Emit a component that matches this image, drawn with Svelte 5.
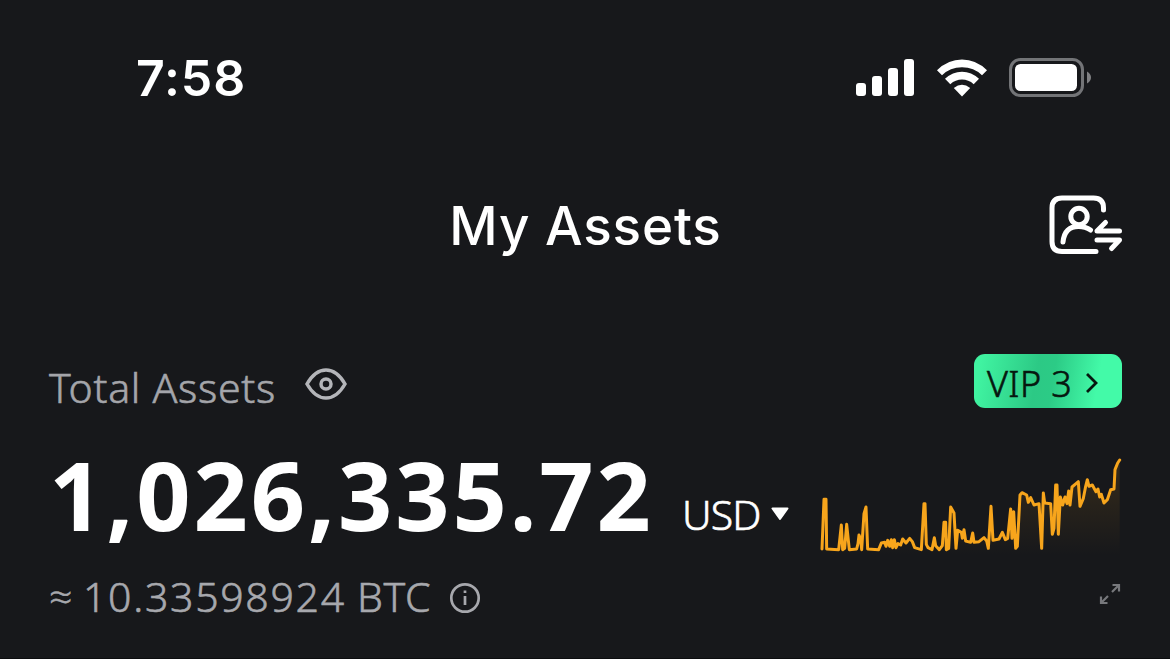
<script lang="ts">
    const time = "7:58";
    const balance = "1,026,335.72";
    const btc = "10.33598924";
    const bars = [13, 20, 28, 37];

    // balance history, left to right
    const history: [number, number][] = [
        [36, 312], [42, 163], [48, 163], [50, 312], [86, 314], [94, 240],
        [98, 314], [104, 310], [110, 238], [118, 314], [140, 312], [144, 296],
        [147, 270], [152, 282], [155, 314], [162, 206], [168, 186], [173, 312],
        [206, 314], [214, 294], [224, 292], [228, 304], [233, 286], [239, 304],
        [244, 284], [248, 308], [253, 284], [258, 308], [264, 296], [272, 300],
        [278, 282], [288, 294], [299, 280], [307, 290], [314, 308], [334, 314],
        [342, 176], [345, 176], [349, 298], [354, 308], [366, 314], [373, 278],
        [377, 302], [388, 314], [397, 302], [402, 232], [407, 232], [409, 314],
        [416, 310], [422, 186], [432, 204], [438, 310], [443, 256], [454, 262],
        [457, 280], [462, 254], [467, 288], [482, 292], [488, 264], [492, 292],
        [507, 290], [522, 278], [530, 288], [535, 310], [543, 184], [549, 286],
        [567, 282], [577, 262], [586, 284], [593, 280], [602, 192], [606, 280],
        [611, 200], [617, 310], [622, 304], [630, 150], [636, 143], [650, 150],
        [655, 172], [662, 158], [672, 180], [687, 176], [695, 310], [700, 144],
        [704, 174], [722, 176], [727, 268], [732, 250], [737, 120], [741, 120],
        [745, 268], [751, 156], [758, 180], [765, 156], [771, 176], [776, 138],
        [780, 180], [786, 126], [798, 116], [805, 110], [810, 184], [820, 160],
        [827, 124], [832, 104], [837, 124], [847, 120], [858, 140], [864, 132],
        [869, 156], [874, 148], [882, 174], [892, 164], [902, 134], [912, 132],
        [915, 74], [923, 54], [929, 45],
    ];

    const line = history.map(p => p.join(",")).join(" ");
</script>

<main>
    <header class="status">
        <div class="time">{time}</div>
        <div class="indicators">
            <div class="signal">
                {#each bars as height}
                    <i style="height: {height}px"></i>
                {/each}
            </div>
            <svg class="wifi" viewBox="0 0 52 38">
                <path d="M1 11.2Q12 .5 26 .5T51 11.2L46 16.3Q38 8.3 26 8.3T6 16.3Z" />
                <path d="M9 19.8Q16.5 12.7 26 12.7T43 19.8L37.7 25.2Q32.5 20.6 26 20.6T14.3 25.2Z" />
                <path d="M17.8 29Q26 22.5 34.2 29L26 37.5Z" />
            </svg>
            <svg class="battery" viewBox="0 0 82 39">
                <rect x="1.5" y="1.5" width="72" height="36" rx="10" fill="none" stroke="#737477" stroke-width="3" />
                <rect x="6" y="6" width="62" height="27" rx="5.5" fill="#fff" />
                <path d="M78 13.5Q82 16 82 19.5T78 25.5Z" fill="#808083" />
            </svg>
        </div>
    </header>

    <nav>
        <h1>My Assets</h1>
        <svg class="switch" viewBox="0 0 74 60">
            <path d="M54.5 15V13Q54.5 3 44.5 3H13Q3 3 3 13V46.5Q3 56.5 13 56.5H47" />
            <circle cx="30" cy="21.5" r="8.2" />
            <path d="M14 47Q15.5 31.5 29.500 31.500Q36.500 31.500 41.500 35" />
            <path d="M70.500 36H48L56.500 27.500" />
            <path d="M48 45H70.500L62.500 53.500" />
        </svg>
    </nav>

    <section>
        <div class="top">
            <span class="label">Total Assets</span>
            <svg class="eye" viewBox="0 0 42 32">
                <path d="M2 16Q10 2 21 2T40 16Q32 30 21 30T2 16Z" />
                <circle cx="21" cy="16" r="5" />
            </svg>
            <div class="vip">
                <span>VIP 3</span>
                <svg viewBox="0 0 14 22"><path d="M2 2L11 11L2 20" /></svg>
            </div>
        </div>

        <div class="main">
            <div class="balance">{balance}</div>
            <div class="currency">USD</div>
            <svg class="caret" viewBox="0 0 20 14">
                <path d="M2.5 1.5H17.5L10 12Z" />
            </svg>
            <svg class="chart" viewBox="0 0 960 360">
                <defs>
                    <linearGradient id="fade" x1="0" y1="0" x2="0" y2="1">
                        <stop offset="0" stop-color="#f7a41b" stop-opacity="0.14" />
                        <stop offset="1" stop-color="#f7a41b" stop-opacity="0" />
                    </linearGradient>
                </defs>
                <polygon points="36,330 {line} 929,330" fill="url(#fade)" />
                <polyline points={line} />
            </svg>
        </div>

        <div class="bottom">
            <span class="approx">≈</span>
            <span class="btc">{btc}</span>
            <span class="unit">BTC</span>
            <svg class="info" viewBox="0 0 32 32">
                <circle cx="16" cy="16" r="13.7" />
                <path d="M16 14V23M16 8.5V11" />
            </svg>
            <svg class="expand" viewBox="0 0 22 22">
                <path d="M13 9L20 2M13.5 2H20V8.5M9 13L2 20M2 13.5V20H8.5" />
            </svg>
        </div>
    </section>
</main>

<style>
    :global(body) {
        background: #17181b;
    }

    main {
        box-sizing: border-box;
        height: 659px;
        overflow: hidden;
        border-bottom: 1px solid #0c0d0f;
        color: #fff;
        font-family: "Noto Sans", "Open Sans", sans-serif;
        white-space: nowrap;
    }

    svg {
        display: block;
        flex-shrink: 0;
    }

    .status {
        display: flex;
        justify-content: space-between;
        align-items: center;
        height: 155px;
        padding: 0 79px 0 136px;
    }

    .time {
        font: 600 50px/60px Inter, sans-serif;
        letter-spacing: 0.9px;
    }

    .indicators {
        display: flex;
        align-items: center;
    }

    .signal {
        display: flex;
        align-items: flex-end;
        gap: 6px;
        height: 37px;
        margin-right: 22px;
    }

    .signal i {
        width: 10px;
        border-radius: 3px;
        background: #fff;
    }

    .wifi {
        width: 52px;
        height: 38px;
        margin-right: 21px;
        fill: #fff;
    }

    .battery {
        width: 82px;
        height: 39px;
    }

    nav {
        display: grid;
        grid-template-columns: 1fr auto 1fr;
        align-items: center;
        height: 141px;
        padding: 0 48px;
    }

    h1 {
        grid-column: 2;
        margin: 0 -1px 0 0;
        font: 500 53px/64px Inter, sans-serif;
        letter-spacing: 0.8px;
    }

    .switch {
        justify-self: end;
        width: 74px;
        height: 60px;
        margin: -2px -1px 0 0;
        fill: none;
        stroke: #fff;
        stroke-width: 5;
        stroke-linecap: round;
        stroke-linejoin: round;
    }

    section {
        padding: 58px 48px 0 49px;
    }

    .top {
        display: flex;
        align-items: center;
        height: 54px;
    }

    .label,
    .currency,
    .bottom {
        -webkit-text-stroke: 0.6px currentColor;
    }

    .label {
        width: 256px;
        padding-top: 11px;
        color: #a4a5aa;
        font-size: 41px;
        font-weight: 300;
        line-height: 54px;
        letter-spacing: 0.7px;
    }

    .eye {
        width: 42px;
        height: 32px;
        margin-top: 6px;
        fill: none;
        stroke: #b4b5b9;
        stroke-width: 3.5;
    }

    .vip {
        box-sizing: border-box;
        display: flex;
        align-items: center;
        width: 148px;
        height: 54px;
        margin-left: auto;
        padding-left: 13px;
        border-radius: 11px;
        background: linear-gradient(100deg, #40f3a1 5%, #2cc985 42%, #2ccb86 53%, #43faa8 82%);
        color: #06170f;
        font-size: 36px;
        font-weight: 300;
        line-height: 54px;
        letter-spacing: 0.4px;
        -webkit-text-stroke: 0.6px currentColor;
    }

    .vip span {
        width: 98px;
        padding-top: 5px;
    }

    .vip svg {
        width: 14px;
        height: 22px;
        margin-top: 3px;
        fill: none;
        stroke: #06170f;
        stroke-width: 2.8;
    }

    .main {
        display: flex;
        height: 120px;
        margin-top: 37px;
    }

    .balance {
        width: 633px;
        margin-top: -11px;
        font-size: 95px;
        font-weight: 700;
        line-height: 120px;
        letter-spacing: 2.9px;
    }

    .currency {
        width: 88px;
        padding-top: 41px;
        font-size: 41px;
        font-weight: 300;
        line-height: 56px;
        letter-spacing: -0.9px;
    }

    .caret {
        width: 20px;
        height: 14px;
        margin: 62px 20px 0 0;
        fill: #fff;
        stroke: #fff;
        stroke-width: 2;
        stroke-linejoin: round;
    }

    .chart {
        width: 320px;
        height: 120px;
        margin-right: -8px;
    }

    .chart polyline {
        fill: none;
        stroke: #f7a51c;
        stroke-width: 9;
        stroke-linejoin: round;
        stroke-linecap: round;
    }

    .bottom {
        display: flex;
        align-items: center;
        height: 60px;
        margin-top: 3px;
        color: #a7a8ad;
        font-size: 41px;
        font-weight: 300;
        line-height: 56px;
    }

    .bottom span {
        margin-top: -4px;
    }

    .approx {
        width: 34px;
    }

    .btc {
        width: 274px;
        letter-spacing: 1.7px;
    }

    .unit {
        width: 92px;
        letter-spacing: 0.6px;
    }

    .info {
        width: 32px;
        height: 32px;
        fill: none;
        stroke: #a7a8ad;
        stroke-width: 2.7;
    }

    .expand {
        width: 22px;
        height: 22px;
        margin: -8px 1px 0 auto;
        fill: none;
        stroke: #77787c;
        stroke-width: 2.2;
    }
</style>
